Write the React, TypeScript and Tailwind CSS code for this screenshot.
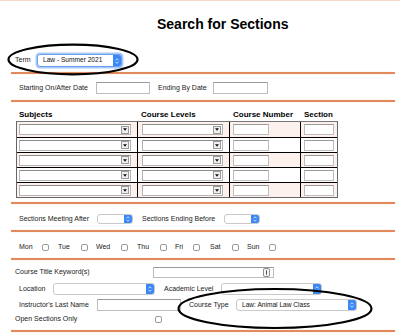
const font = { fontFamily: '"Liberation Sans", Arial, sans-serif' };

function Rule({ className = '' }: { className?: string }) {
  return <div className={`ml-[11px] mr-[5px] h-[2px] bg-[#e08a5e] shadow-[0_0_1px_#f0b898] ${className}`} />;
}

function Chevrons() {
  return (
    <svg viewBox="0 0 8 10" className="w-[6px] h-[8px]">
      <path d="M2 4 L4 2 L6 4 M2 6 L4 8 L6 6" fill="none" stroke="white" strokeWidth="1" />
    </svg>
  );
}

function MacSelect({ w, h = 'h-[11px]', text, focused = false }: { w: string; h?: string; text?: string; focused?: boolean }) {
  return (
    <div
      className={`${w} ${h} flex items-center rounded-[3px] bg-white border ${
        focused ? 'border-[#6a9ff0] shadow-[0_0_0_1.5px_#a9c9f8]' : 'border-[#c9c9c9]'
      }`}
    >
      <span className="flex-1 pl-[5px] text-[6.6px] leading-none text-[#111] whitespace-nowrap overflow-hidden">{text}</span>
      <div className="w-[8px] h-full rounded-r-[2px] bg-[#3b87f5] flex items-center justify-center">
        <Chevrons />
      </div>
    </div>
  );
}

function OldSelect({ w }: { w: string }) {
  return (
    <div className={`${w} h-[11px] flex items-center justify-end bg-white border border-[#b4b4b4] border-t-[#8c8c8c] pr-[1px]`}>
      <div className="w-[8px] h-[8px] bg-[#efefef] border border-[#9a9a9a] flex items-center justify-center">
        <svg viewBox="0 0 6 4" className="w-[4px] h-[3px]">
          <path d="M0 0 L6 0 L3 4 Z" fill="#111" />
        </svg>
      </div>
    </div>
  );
}

function TextBox({ w, h = 'h-[11px]', children }: { w: string; h?: string; children?: React.ReactNode }) {
  return (
    <div className={`${w} ${h} bg-white border border-[#bdbdbd] border-t-[#9a9a9a] flex items-center justify-end`}>
      {children}
    </div>
  );
}

function Check() {
  return <div className="w-[7px] h-[7px] rounded-[2px] border border-[#9b9b9b] bg-white shrink-0" />;
}

const days = [
  { d: 'Mon', lw: 'w-[23px]', gap: 'mr-[9px]' },
  { d: 'Tue', lw: 'w-[23px]', gap: 'mr-[8px]' },
  { d: 'Wed', lw: 'w-[25px]', gap: 'mr-[9px]' },
  { d: 'Thu', lw: 'w-[23px]', gap: 'mr-[8px]' },
  { d: 'Fri', lw: 'w-[18px]', gap: 'mr-[10px]' },
  { d: 'Sat', lw: 'w-[22px]', gap: 'mr-[8px]' },
  { d: 'Sun', lw: 'w-[22px]', gap: '' },
];

export default function App() {
  const rows = [0, 1, 2, 3, 4];
  return (
    <div className="relative w-[400px] h-[333px] overflow-hidden bg-white text-[7px] text-[#222] border-t border-[#f7d9ca]" style={font}>
      <div className="h-[15px]" />
      <h1 className="pl-[157px] h-[16px] text-[14px] leading-[16px] font-bold text-black whitespace-nowrap">Search for Sections</h1>

      {/* term */}
      <div className="mt-[22px] h-[13px] flex items-center pl-[15px]">
        <span className="w-[22px]">Term</span>
        <MacSelect w="w-[85px]" h="h-[13px]" text="Law - Summer 2021" focused />
      </div>
      <Rule className="mt-[5px]" />

      {/* dates */}
      <div className="mt-[8px] h-[12px] flex items-center pl-[19px]">
        <span className="w-[77px] whitespace-nowrap">Starting On/After Date</span>
        <TextBox w="w-[54px]" h="h-[12px]" />
        <span className="ml-[8px] w-[55px] whitespace-nowrap">Ending By Date</span>
        <TextBox w="w-[55px]" h="h-[12px]" />
      </div>
      <Rule className="mt-[6px]" />

      {/* course table */}
      <div className="mt-[8px] ml-[16px] w-[322px] h-[10px] grid grid-cols-[121px_92px_71px_38px] items-center text-[8px] font-bold text-black leading-none">
        <span className="pl-[3px]">Subjects</span>
        <span className="pl-[4px]">Course Levels</span>
        <span className="pl-[4px] whitespace-nowrap">Course Number</span>
        <span className="pl-[4px]">Section</span>
      </div>
      <div className="mt-[1px] ml-[16px] w-[322px] border border-[#666] border-t-[#777]">
        {rows.map((r) => (
          <div
            key={r}
            className={`grid grid-cols-[120px_92px_71px_37px] h-[15px] ${r > 0 ? 'border-t border-black' : ''} ${
              r % 2 === 0 ? 'bg-[#fdf1ed]' : 'bg-white'
            }`}
          >
            <div className="flex items-center pl-[2px]">
              <OldSelect w="w-[112px]" />
            </div>
            <div className="flex items-center pl-[4px] border-l border-black">
              <OldSelect w="w-[81px]" />
            </div>
            <div className="flex items-center pl-[3px] border-l border-black">
              <TextBox w="w-[36px]" />
            </div>
            <div className="flex items-center pl-[3px] border-l border-black">
              <TextBox w="w-[30px]" />
            </div>
          </div>
        ))}
      </div>
      <Rule className="mt-[4px]" />

      {/* times */}
      <div className="mt-[10px] h-[10px] flex items-center pl-[19px]">
        <span className="w-[78px] whitespace-nowrap">Sections Meeting After</span>
        <MacSelect w="w-[36px]" h="h-[10px]" />
        <span className="ml-[9px] w-[82px] whitespace-nowrap">Sections Ending Before</span>
        <MacSelect w="w-[36px]" h="h-[10px]" />
      </div>
      <Rule className="mt-[6px]" />

      {/* days */}
      <div className="mt-[10px] h-[10px] flex items-center pl-[19px]">
        {days.map((x) => (
          <div key={x.d} className={`flex items-center ${x.gap}`}>
            <span className={x.lw}>{x.d}</span>
            <Check />
          </div>
        ))}
      </div>
      <Rule className="mt-[6px]" />

      {/* misc filters */}
      <div className="mt-[7px] h-[11px] flex items-center pl-[15px]">
        <span className="w-[138px] whitespace-nowrap">Course Title Keyword(s)</span>
        <TextBox w="w-[121px]">
          <svg viewBox="0 0 8 10" className="w-[7px] h-[9px] mr-[3px]">
            <rect x="0.5" y="0.5" width="7" height="9" rx="1.5" fill="#f4f4f4" stroke="#777" />
            <path d="M4 2.5 V7.5" stroke="#333" strokeWidth="1" />
          </svg>
        </TextBox>
      </div>
      <div className="mt-[5px] h-[12px] flex items-center pl-[19px]">
        <span className="w-[34px]">Location</span>
        <MacSelect w="w-[102px]" h="h-[12px]" />
        <span className="ml-[9px] w-[57px] whitespace-nowrap">Academic Level</span>
        <MacSelect w="w-[101px]" h="h-[12px]" />
      </div>
      <div className="mt-[4px] h-[12px] flex items-center pl-[19px]">
        <span className="w-[78px] whitespace-nowrap">Instructor's Last Name</span>
        <TextBox w="w-[84px]" h="h-[12px]" />
        <span className="ml-[8px] w-[47px] whitespace-nowrap">Course Type</span>
        <MacSelect w="w-[121px]" h="h-[12px]" text="Law: Animal Law Class" />
      </div>
      <div className="mt-[4px] h-[9px] flex items-center pl-[15px]">
        <span className="w-[140px] whitespace-nowrap">Open Sections Only</span>
        <Check />
      </div>
      <Rule className="mt-[6px]" />

      {/* annotation ellipses */}
      <svg className="absolute left-0 top-0 w-[400px] h-[333px] pointer-events-none" viewBox="0 0 400 333">
        <ellipse cx="73" cy="58.5" rx="64.5" ry="14.8" fill="none" stroke="#000" strokeWidth="2.2" />
        <ellipse cx="275" cy="307.5" rx="96.5" ry="19.5" fill="none" stroke="#000" strokeWidth="2.2" />
      </svg>
    </div>
  );
}
